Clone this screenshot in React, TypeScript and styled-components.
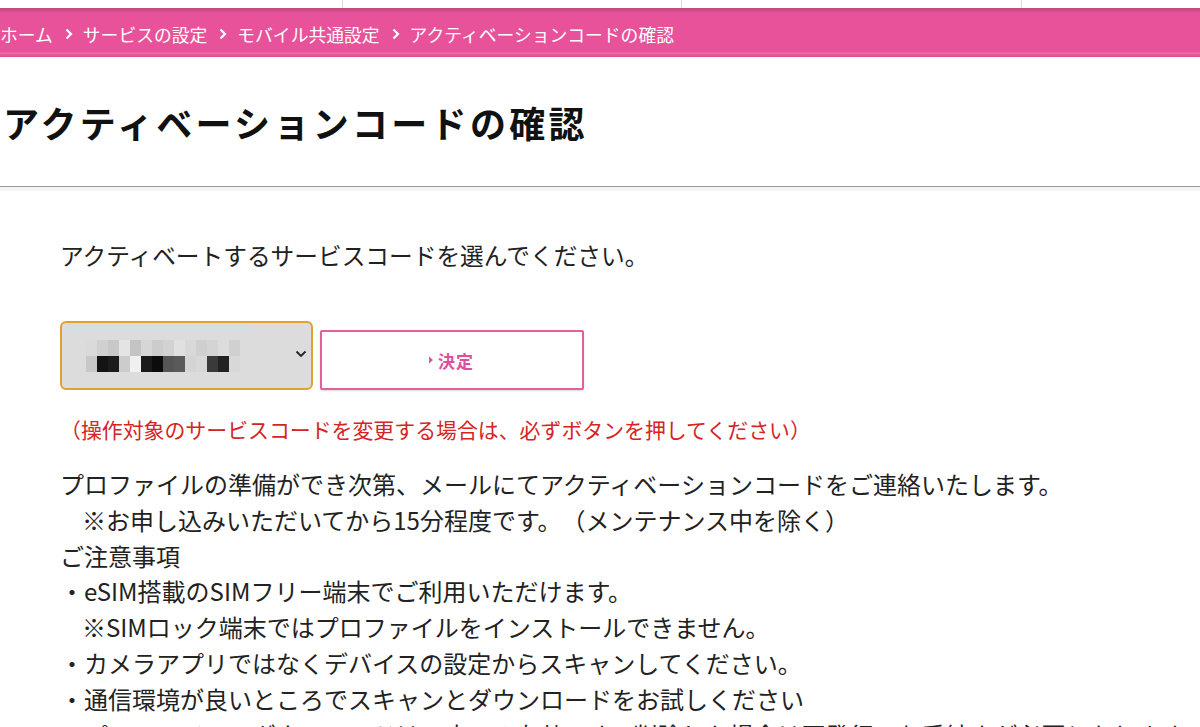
import React from 'react';
import styled, { createGlobalStyle } from 'styled-components';

const GlobalStyle = createGlobalStyle`
    html, body {
        margin: 0;
        padding: 0;
        background: #ffffff;
        overflow: hidden;
    }
    body {
        font-family: 'Noto Sans CJK JP', 'Noto Sans', sans-serif;
        color: #1a1a1a;
        text-spacing-trim: space-all;
    }
`;

const Page = styled.div`
    width: 1200px;
    height: 727px;
    overflow: hidden;
`;

const TopNav = styled.div`
    display: grid;
    grid-template-columns: 343px 339px 340px 1fr;
    height: 8px;
    background: #ffffff;
`;

const NavCell = styled.div`
    border-right: 1px solid #dcdcdc;
    &:last-child {
        border-right: none;
    }
`;

const Breadcrumb = styled.nav`
    display: flex;
    align-items: center;
    height: 49px;
    padding: 2px 0 0 0;
    box-sizing: border-box;
    background: linear-gradient(
        to bottom,
        #c24a7f 0px,
        #d44d8b 3px,
        #e8529a 5px,
        #e8529a 44px,
        #ef73ad 45px,
        #e8529a 47px,
        #d9508f 49px
    );
    color: #ffffff;
    font-size: 17.8px;
    white-space: nowrap;
`;

const Crumb = styled.span`
    letter-spacing: 0;
`;

const Sep = styled.span`
    display: inline-flex;
    align-items: center;
    margin: 0 10px 0 12px;
    svg {
        display: block;
    }
`;

const TitleBox = styled.div`
    display: flex;
    align-items: center;
    height: 129px;
    padding-left: 3px;
    border-bottom: 1px solid #999999;
    box-shadow: 0 4px 0 #f4f4f4;
`;

const Title = styled.h1`
    margin: 0;
    font-size: 36px;
    font-weight: 700;
    letter-spacing: 3.3px;
    color: #111111;
`;

const Content = styled.div`
    padding: 50px 0 0 60px;
`;

const Lead = styled.p`
    margin: 0;
    font-size: 23.7px;
    line-height: 36px;
    color: #222222;
`;

const FormRow = styled.div`
    display: flex;
    align-items: flex-end;
    gap: 7px;
    margin-top: 48px;
`;

const SelectBox = styled.div`
    position: relative;
    display: flex;
    align-items: center;
    width: 253px;
    height: 69px;
    box-sizing: border-box;
    border: 2px solid #e2a12b;
    border-radius: 6px;
    background: #dcdcdc;
    padding-left: 24px;
    &::before {
        content: '';
        position: absolute;
        left: 3px;
        top: 2px;
        width: 186px;
        height: 6px;
        background: #d3dfe2;
    }
`;

const Chevron = styled.span`
    position: absolute;
    right: 4px;
    top: 27px;
    svg {
        display: block;
    }
`;

const SubmitButton = styled.button`
    display: flex;
    align-items: center;
    justify-content: center;
    gap: 4px;
    width: 264px;
    height: 60px;
    box-sizing: border-box;
    border: 2px solid #e0609c;
    border-radius: 2px;
    background: #ffffff;
    color: #e0509a;
    font-family: 'Noto Sans CJK JP', sans-serif;
    font-size: 17px;
    font-weight: 700;
    letter-spacing: 1px;
    padding-right: 8px;
    box-shadow: 0 1px 2px rgba(0, 0, 0, 0.15);
    cursor: pointer;
`;

const Notice = styled.p`
    margin: 24px 0 0 0;
    font-size: 20.9px;
    line-height: 30px;
    color: #d42424;
`;

const Body = styled.div`
    margin-top: 22px;
    font-size: 24px;
    line-height: 35.8px;
    color: #222222;
`;

const Line = styled.div<{ indent?: boolean }>`
    white-space: nowrap;
    padding-left: ${(props) => (props.indent ? '22px' : '0')};
`;

const mosaic = [
    ['#dadada', '#d0d0d0', '#c8c8c8', '#e4e4e4', '#c4c4c4', '#d6d6d6', '#cccccc', '#d2d2d2', '#e0e0e0', '#d8d8d8', '#cfcfcf', '#d4d4d4', '#dcdcdc', '#d0d0d0'],
    ['#c8c8c8', '#141414', '#1c1c1c', '#cccccc', '#f0f0f0', '#1a1a1a', '#0c0c0c', '#555555', '#5a5a5a', '#d4d4d4', '#d8d8d8', '#3a3a3a', '#222222', '#d8d8d8'],
];

const Mosaic = () => (
    <svg width="154" height="32" viewBox="0 0 154 32">
        {mosaic.map((row, r) =>
            row.map((c, i) => <rect key={`${r}-${i}`} x={i * 11} y={r * 16} width="11" height="16" fill={c} />)
        )}
    </svg>
);

const crumbs = ['ホーム', 'サービスの設定', 'モバイル共通設定', 'アクティベーションコードの確認'];

const App = (): JSX.Element => {
    return (
        <Page>
            <GlobalStyle />
            <TopNav>
                <NavCell />
                <NavCell />
                <NavCell />
                <NavCell />
            </TopNav>
            <Breadcrumb>
                {crumbs.map((c, i) => (
                    <React.Fragment key={c}>
                        {i > 0 && (
                            <Sep>
                                <svg width="8" height="12" viewBox="0 0 8 12">
                                    <path d="M1.5 1.5 L6 6 L1.5 10.5" fill="none" stroke="#ffffff" strokeWidth="2.2" />
                                </svg>
                            </Sep>
                        )}
                        <Crumb>{c}</Crumb>
                    </React.Fragment>
                ))}
            </Breadcrumb>
            <TitleBox>
                <Title>アクティベーションコードの確認</Title>
            </TitleBox>
            <Content>
                <Lead>アクティベートするサービスコードを選んでください。</Lead>
                <FormRow>
                    <SelectBox>
                        <Mosaic />
                        <Chevron>
                            <svg width="12" height="8" viewBox="0 0 12 8">
                                <path d="M1.5 1.5 L6 6 L10.5 1.5" fill="none" stroke="#222222" strokeWidth="1.8" />
                            </svg>
                        </Chevron>
                    </SelectBox>
                    <SubmitButton>
                        <svg width="6" height="8" viewBox="0 0 6 8">
                            <path d="M1 0.5 L5 4 L1 7.5 Z" fill="#e0509a" />
                        </svg>
                        決定
                    </SubmitButton>
                </FormRow>
                <Notice>（操作対象のサービスコードを変更する場合は、必ずボタンを押してください）</Notice>
                <Body>
                    <Line>プロファイルの準備ができ次第、メールにてアクティベーションコードをご連絡いたします。</Line>
                    <Line indent>※お申し込みいただいてから15分程度です。（メンテナンス中を除く）</Line>
                    <Line>ご注意事項</Line>
                    <Line>・eSIM搭載のSIMフリー端末でご利用いただけます。</Line>
                    <Line indent>※SIMロック端末ではプロファイルをインストールできません。</Line>
                    <Line>・カメラアプリではなくデバイスの設定からスキャンしてください。</Line>
                    <Line>・通信環境が良いところでスキャンとダウンロードをお試しください</Line>
                    <Line>・プロファイルのダウンロードは一度のみ有効です。削除した場合は再発行のお手続きが必要となりますのでご注意ください</Line>
                </Body>
            </Content>
        </Page>
    );
};

export default App;
